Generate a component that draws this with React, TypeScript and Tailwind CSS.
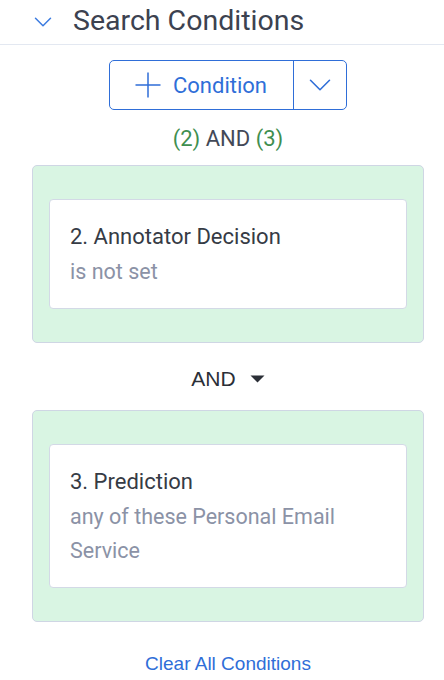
import { ChevronDown } from "lucide-react";

function ConditionCard({ title, detail }: { title: string; detail: string }) {
  return (
    <div className="rounded-[5px] border border-[#cfd6e4] bg-[#d9f5e3] px-[16px] py-[33px]">
      <div className="rounded-[4px] border border-[#d3d9e6] bg-white pl-[20px] pr-4 pt-[18px] pb-[19px]">
        <p className="text-[22px] leading-[37px] text-[#363b45]">{title}</p>
        <p className="text-[21.5px] leading-[34px] text-[#8b92a6]">{detail}</p>
      </div>
    </div>
  );
}

export default function App() {
  return (
    <div className="h-[680px] w-[444px] overflow-hidden bg-white font-['Roboto',sans-serif]">
      {/* Header */}
      <header className="flex h-[45px] items-center border-b border-[#e3e8f1]">
        <ChevronDown className="ml-[28px] h-[30px] w-[30px] text-[#3b7be0]" strokeWidth={1.2} />
        <h2 className="ml-[15px] pb-[2px] text-[28.5px] text-[#3c4250]">Search Conditions</h2>
      </header>

      <main className="pl-3">
        <div className="mt-[15px] flex justify-center">
          <div className="flex h-[50px] w-[238px] rounded-[5px] border-[1.5px] border-[#2f6ed8] text-[#2f6ed8]">
            <button className="flex flex-1 items-center gap-[12px] pl-[25px]">
              <svg width="26" height="26" viewBox="0 0 26 26">
                <path d="M13 0.5v25M0.5 13h25" stroke="#2f6ed8" strokeWidth="1.5" fill="none" />
              </svg>
              <span className="text-[22px]">Condition</span>
            </button>
            <button className="flex w-[53px] items-center justify-center border-l-[1.5px] border-[#2f6ed8]">
              <ChevronDown className="h-[38px] w-[38px]" strokeWidth={1} />
            </button>
          </div>
        </div>

        <p className="mt-[16px] text-center text-[22px] leading-[26px] text-[#434957]">
          <span className="text-[#3f8f50]">(2)</span> AND{" "}
          <span className="text-[#3f8f50]">(3)</span>
        </p>

        <div className="mt-[13px] px-5">
          <ConditionCard title="2. Annotator Decision" detail="is not set" />
        </div>

        <div className="mt-[23px] flex h-[26px] items-center justify-center gap-[14px] font-['Liberation_Sans',sans-serif] text-[21px] text-[#2b2f37]">
          <span>AND</span>
          <svg width="15" height="8" viewBox="0 0 15 8">
            <path d="M0.5 0.5h14L7.5 7.5z" fill="#2b2f37" />
          </svg>
        </div>

        <div className="mt-[18px] px-5">
          <ConditionCard title="3. Prediction" detail="any of these Personal Email Service" />
        </div>

        <p className="mt-[30px] text-center font-['Liberation_Sans',sans-serif] text-[19px] leading-[24px] text-[#2f6ed8]">
          Clear All Conditions
        </p>
      </main>
    </div>
  );
}
